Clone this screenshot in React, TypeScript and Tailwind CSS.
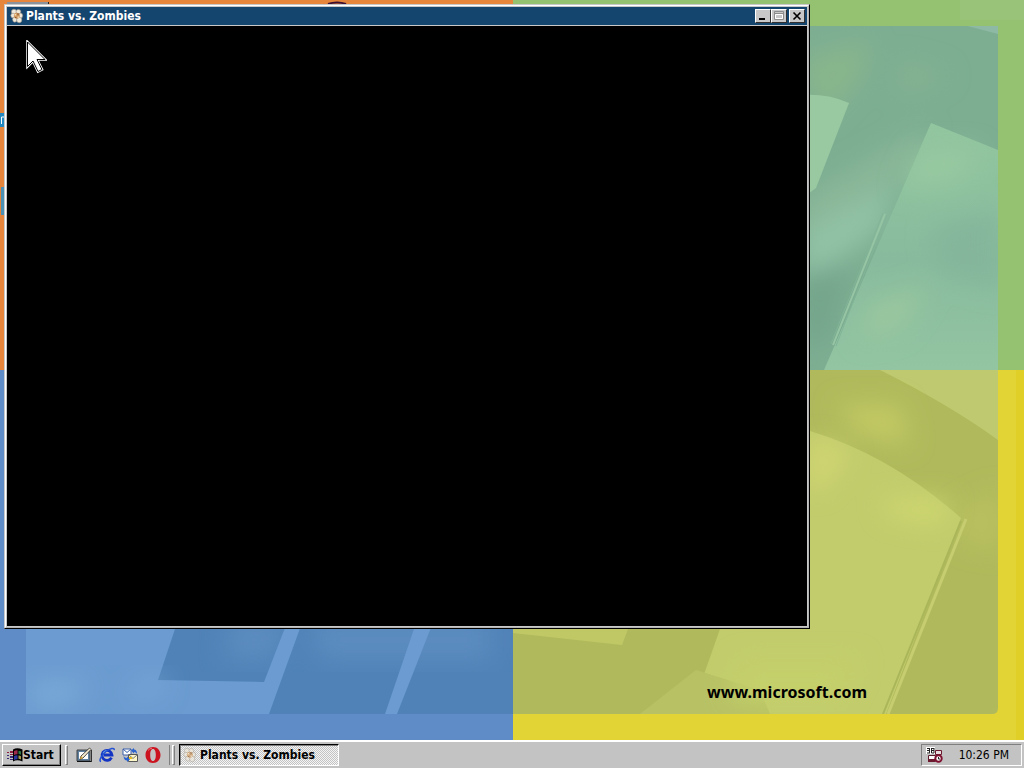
import type { ReactNode } from 'react'
import { clsx } from 'clsx'

function FlowerIcon({ className }: { className?: string }) {
  return (
    <svg viewBox="0 0 16 16" className={clsx('w-4 h-4 shrink-0', className)} aria-hidden="true">
      <g fill="#efe9dc" stroke="#9a9488" strokeWidth="0.6">
        <ellipse cx="5" cy="3.8" rx="2.6" ry="2.6" />
        <ellipse cx="9.4" cy="3.8" rx="2.4" ry="2.4" />
        <ellipse cx="4" cy="7.6" rx="2.2" ry="2.4" />
        <ellipse cx="11.6" cy="7.6" rx="2" ry="2.6" />
        <ellipse cx="5.8" cy="11.6" rx="2.2" ry="2.6" />
        <ellipse cx="10.2" cy="12" rx="2.6" ry="2.8" />
      </g>
      <circle cx="7.8" cy="7.8" r="3" fill="#cf9860" />
      <path d="M5.6 6h1.6v1.6H5.6zM8.6 8.6h1.6v1.2H8.6z" fill="#f7dfb8" />
      <path d="M8.4 5.2h1.2v2H8.4zM6 9h1.4v1H6z" fill="#8d5a2c" />
    </svg>
  )
}

function WindowsIcon() {
  return (
    <svg viewBox="0 0 16 14" className="w-4 h-3.5 shrink-0" aria-hidden="true">
      <path d="M6 1.500q4-2.500 9.500 0v12q-5.500-2.500-9.500 0z" fill="#000" />
      <path d="M7 3q1.500-1 3.500-.8v4Q8.500 6 7 7z" fill="#a02a4c" />
      <path d="M11.500 2.800Q13 2.700 14 3.400v3.400q-1-.700-2.500-.8z" fill="#2c7a48" />
      <path d="M7 8q1.500-1 3.500-.8v4Q8.500 11 7 12z" fill="#2b35a0" />
      <path d="M11.500 7.600Q13 7.500 14 8.200v3.400q-1-.700-2.500-.8z" fill="#a8984c" />
      <path d="M3 3h3v2H3zM0 4h2v1H0zM3 6h3v1H3z" fill="#8e2140" />
      <path d="M3 8h3v2H3zM0 7h2v1H0zM0 10h2v1H0zM3 11h3v1H3z" fill="#3b2978" />
    </svg>
  )
}

function ShowDesktopIcon() {
  return (
    <svg viewBox="0 0 16 16" className="w-4 h-4" aria-hidden="true">
      <path d="M1 3h13v11H1z" fill="#5d7fa0" stroke="#444" />
      <path d="M3 5h9v7H3z" fill="#fff" />
      <path d="M1 14.500h15" stroke="#111" />
      <path d="M15.500 3v12" stroke="#333" />
      <path d="M4 12.500 5 9l8.500-8L15 2.500 7 11z" fill="#f3ead0" stroke="#222" strokeWidth="0.8" />
      <path d="m5 9 2 2-3 1.500z" fill="#d9a83c" />
    </svg>
  )
}

function ExplorerIcon() {
  return (
    <svg viewBox="0 0 16 16" className="w-4 h-4" aria-hidden="true">
      <path
        d="M12.500 10.600A5 5 0 1 1 13 8H5"
        fill="none"
        stroke="#1434c4"
        strokeWidth="2.800"
      />
      <path d="M4 6.500A4.500 4.500 0 0 1 8 3.600" fill="none" stroke="#5f9be8" strokeWidth="1.200" />
      <path
        d="M2 14.500C-.5 14 2 9 6.500 5S15.800.2 15.200 3.200"
        fill="none"
        stroke="#2452d2"
        strokeWidth="1.500"
      />
    </svg>
  )
}

function OutlookIcon() {
  return (
    <svg viewBox="0 0 16 16" className="w-4 h-4" aria-hidden="true">
      <path d="M1 2h8v6H1z" fill="#fff" stroke="#3a5fa8" />
      <path d="m1 2 4 3.500L9 2" fill="none" stroke="#3a5fa8" />
      <path d="M6.500 7.500h9v7h-9z" fill="#fdf6c8" stroke="#555" />
      <path d="m6.500 7.500 4.500 4 4.500-4" fill="none" stroke="#777" />
      <path d="M9 3.500 12 1v1.500q3 0 3 4.500-1-2-3-2V6.500z" fill="#2a62d0" />
      <path d="M8 12.500 5 15v-1.500q-3 0-3.500-4.500 1 2 3.500 2V9.500z" fill="#2a62d0" />
      <path d="M7 10h3v2H7z" fill="#e5bd22" />
    </svg>
  )
}

function OperaIcon() {
  return (
    <svg viewBox="0 0 16 16" className="w-4 h-4" aria-hidden="true">
      <path
        fillRule="evenodd"
        d="M8 0c4.400 0 7.500 3.400 7.500 8s-3.100 8-7.500 8S.5 12.600.5 8 3.600 0 8 0zm0 2C6.100 2 5.200 4.500 5.200 8S6.100 14 8 14s2.800-2.500 2.800-6S9.900 2 8 2z"
        fill="#cc1420"
      />
      <path d="M3 3.500Q4.500 1.500 7 1.200" fill="none" stroke="#f0727a" />
    </svg>
  )
}

function SchedulerIcon() {
  return (
    <svg viewBox="0 0 17 16" className="w-[17px] h-4 shrink-0" aria-hidden="true">
      <path d="M0 0h9v7H0z" fill="#fff" />
      <path d="M1 1.500h3M1 3.500h3M1 6h3M3.500 1v5M5.500 1v5M8 1v5M5.500 1.500H8M5.500 3.500H8M5.500 6H8" stroke="#222" />
      <path d="M2.500 8.500h7v6h-7z" fill="#fff" stroke="#5b1a2c" />
      <path d="M2 12h7v3H2z" fill="#6b1a30" />
      <path d="M9.500 3.500h6v4h-6z" fill="#e8e0e0" stroke="#6b1a30" />
      <circle cx="12.500" cy="11.500" r="3.200" fill="#fff" stroke="#7d1230" strokeWidth="2" />
      <path d="M12.500 10v2h1.500" fill="none" stroke="#222" />
    </svg>
  )
}

function Wallpaper() {
  return (
    <svg
      viewBox="0 0 1024 740"
      preserveAspectRatio="none"
      className="absolute inset-0 w-full h-full"
      aria-hidden="true"
    >
      <defs>
        <filter id="soft" x="-30%" y="-30%" width="160%" height="160%">
          <feGaussianBlur stdDeviation="12" />
        </filter>
        <linearGradient id="pane" x1="0" y1="0" x2="0" y2="1">
          <stop offset="0" stopColor="#92c69f" />
          <stop offset="0.550" stopColor="#88bb9d" />
          <stop offset="1" stopColor="#93c5a2" />
        </linearGradient>
        <clipPath id="green">
          <path d="M513 26h485v344H513z" />
        </clipPath>
        <clipPath id="yellow">
          <path d="M513 370h485v338q0 6-6 6H513z" />
        </clipPath>
        <clipPath id="blue">
          <path d="M26 370h487v344H26z" />
        </clipPath>
      </defs>

      <path d="M0 0h513v370H0z" fill="#e6863c" />
      <path d="M513 0h511v370H513z" fill="#94c270" />
      <path d="M960 0h64v20h-64z" fill="#9ac37a" />
      <path d="M0 370h513v370H0z" fill="#5f8cc6" />
      <path d="M513 370h511v370H513z" fill="#e2d434" />
      <path d="M1016 370h8v370h-8z" fill="#e0cf27" />

      <g clipPath="url(#green)">
        <path d="M513 26h485v344H513z" fill="#7dae92" />
        <g filter="url(#soft)">
          <path d="M800 60 870 40 860 80 820 120z" fill="#88b68b" />
          <path d="M900 60 950 75 900 95z" fill="#84b38f" />
          <path d="M800 200 930 125 905 170 800 240z" fill="#8ab798" />
          <path d="M800 235 900 180 880 230 800 290z" fill="#92c2a6" />
          <path d="M800 275 850 260 830 340 800 350z" fill="#74a68c" />
        </g>
        <path d="M960 24 998 34V24z" fill="#8eb9a4" />
        <path d="M800 95Q828 93 849 103L816 188 800 200z" fill="#99c9a0" />
        <path d="M931 123 998 150V370H824z" fill="url(#pane)" />
        <g filter="url(#soft)">
          <path d="M920 150 980 150 960 180 900 190z" fill="#98c9a0" />
          <path d="M870 305 930 285 900 330 860 340z" fill="#9ac79e" />
          <path d="M930 230 998 210V290L940 270z" fill="#84b69b" />
        </g>
        <path d="M883 213 831 344M887 215 836 346" stroke="#82b498" fill="none" />
        <path d="M885 214 833 345" stroke="#96c5a4" strokeWidth="2" fill="none" />
      </g>

      <g clipPath="url(#yellow)">
        <path d="M513 370h485v344H513z" fill="#b0ba5c" />
        <path d="M880 370H998V440Q950 405 880 370z" fill="#bfc96f" />
        <g filter="url(#soft)">
          <path d="M835 405 900 405 910 445 860 435z" fill="#c2c964" />
          <path d="M960 510 1000 490V550L960 540z" fill="#b9c05e" />
        </g>
        <path d="M513 629 628 629 622 645 513 633z" fill="#c0c866" />
        <path d="M810 431Q890 455 961 518L886 714H690L720 629 810 500z" fill="#c2cc6c" />
        <path d="M696 670 760 690 770 714H640z" fill="#b8c265" />
        <g filter="url(#soft)">
          <path d="M810 440 850 450 820 490 810 490z" fill="#d2d672" />
          <path d="M880 500 950 500 940 525 890 515z" fill="#cfd86f" />
          <path d="M740 660 860 660 840 700 730 700z" fill="#c4d06b" />
        </g>
        <path d="M961 521 883 714" stroke="#aab65a" strokeWidth="2" fill="none" />
        <path d="M966 519 888 714" stroke="#c5cd70" strokeWidth="3" fill="none" />
      </g>

      <g clipPath="url(#blue)">
        <path d="M26 370h487v344H26z" fill="#5082b7" />
        <g filter="url(#soft)">
          <path d="M230 620h60l-15 40h-50zM310 620h180v40H320z" fill="#5b8cc0" />
        </g>
        <path d="M26 620H178L158 680 264 682 288 620H303L269 714H26z" fill="#6b9bd0" />
        <g filter="url(#soft)">
          <path d="M30 680 90 680 70 708 30 708z" fill="#78a8d7" />
          <path d="M130 690 160 675 165 690 130 700z" fill="#7aa8da" />
        </g>
        <path d="M417 620H434L397 714H385z" fill="#6b9bd0" />
      </g>

      {/* Desktop icons showing from behind the open window */}
      <path d="M7 2h41v2H7z" fill="#8b929b" />
      <path d="M48 2h1v2h-1z" fill="#222" />
      <path d="M328 4q9-3 18 0" fill="none" stroke="#3b1034" strokeWidth="2" />
      <path d="M0 113h4v14H0z" fill="#2389c2" />
      <path d="M1.500 124v-7h3" fill="none" stroke="#fff" />
      <path d="M1 187h4v28H1z" fill="#4a91b5" />
    </svg>
  )
}

function Cursor() {
  const outline = 'M1.500 2v24.500l5.500-5.500 5 10.500 4-2-5-10h8z'
  return (
    <svg viewBox="0 0 21 34" className="absolute left-[19px] top-3.5 w-[21px] h-[34px]" aria-hidden="true">
      <path d={outline} fill="#fff" stroke="#fff" strokeWidth="2.500" />
      <path d={outline} fill="#fff" stroke="#000" strokeWidth="1" />
    </svg>
  )
}

function CaptionButton({ label, className, children }: { label: string; className?: string; children: ReactNode }) {
  return (
    <button
      aria-label={label}
      className={clsx(
        'w-4 h-3.5 flex items-center justify-center bg-[#c8c8c8] border border-t-white border-l-white border-r-[#303030] border-b-[#303030]',
        className
      )}
    >
      <svg viewBox="0 0 12 10" className="w-3 h-2.5" fill="none" aria-hidden="true">
        {children}
      </svg>
    </button>
  )
}

function GameWindow() {
  return (
    <section
      aria-label="Plants vs. Zombies"
      className="absolute left-1 top-1 border border-t-[#c8c8c8] border-l-[#c8c8c8] border-r-black border-b-black"
    >
      <div className="border border-t-white border-l-white border-r-[#b4b4b4] border-b-[#b4b4b4] bg-[#c8c8c8] p-px">
        <header className="h-[18px] flex items-center bg-[#14456f] pl-0.5 pr-0.5">
          <FlowerIcon />
          <h1 className="flex-1 pl-px font-['DejaVu_Sans_Condensed','DejaVu_Sans',sans-serif] font-bold text-xs text-white">
            Plants vs. Zombies
          </h1>
          <div className="flex">
            <CaptionButton label="Minimize">
              <path d="M2 8h6" stroke="#000" strokeWidth="2" />
            </CaptionButton>
            <CaptionButton label="Maximize">
              <path d="M1.500 0.500h9v8h-9zM2 2.500h8" stroke="#8c8c8c" />
              <path d="M2.500 3.500h7v4h-7z" stroke="#fff" />
            </CaptionButton>
            <CaptionButton label="Close" className="ml-0.5">
              <path d="m2.500 1.500 7 7m0-7-7 7" stroke="#000" strokeWidth="1.600" />
            </CaptionButton>
          </div>
        </header>
        <div className="relative mt-px w-[800px] h-[600px] bg-black">
          <Cursor />
        </div>
      </div>
    </section>
  )
}

function Grip() {
  return <span className="w-[3px] h-5 border border-t-white border-l-white border-r-[#808080] border-b-[#808080]" />
}

const quickLaunch = [
  { label: 'Show Desktop', icon: <ShowDesktopIcon /> },
  { label: 'Internet Explorer', icon: <ExplorerIcon /> },
  { label: 'Outlook Express', icon: <OutlookIcon /> },
  { label: 'Opera', icon: <OperaIcon /> },
]

function Taskbar() {
  return (
    <footer className="h-7 shrink-0 flex items-center bg-[#c3c3c3] border-t-2 border-white px-0.5 font-['DejaVu_Sans_Condensed','DejaVu_Sans',sans-serif] text-xs">
      <button className="h-[22px] w-[59px] flex items-center pl-1 border border-t-white border-l-white border-r-black border-b-black shadow-[inset_-1px_-1px_0_#808080]">
        <WindowsIcon />
        <span className="font-bold">Start</span>
      </button>
      <div className="flex items-center pl-1 pr-1.5">
        <Grip />
      </div>
      <nav aria-label="Quick Launch" className="flex items-center gap-[7px] pl-0.5 pr-2">
        {quickLaunch.map((item) => (
          <button key={item.label} aria-label={item.label}>
            {item.icon}
          </button>
        ))}
      </nav>
      <div className="flex items-center gap-0.5 pr-1">
        <span className="w-px h-5 bg-[#808080]" />
        <Grip />
      </div>
      <button className="h-[22px] w-40 flex items-center pl-0.5 border border-t-black border-l-black border-r-white border-b-white shadow-[inset_1px_1px_0_#808080] bg-[#c8c8c8] bg-[repeating-conic-gradient(#c3c3c3_0_25%,#f4f4f4_0_50%)] bg-size-[2px_2px]">
        <FlowerIcon className="opacity-70" />
        <span className="pl-0.5 font-bold">Plants vs. Zombies</span>
      </button>
      <div className="ml-auto h-[22px] w-[101px] flex items-center justify-between pl-1 pr-3 border border-t-[#808080] border-l-[#808080] border-r-white border-b-white">
        <SchedulerIcon />
        <time>10:26 PM</time>
      </div>
    </footer>
  )
}

export default function App() {
  return (
    <div className="h-screen flex flex-col overflow-hidden text-black">
      <main className="relative flex-1 overflow-hidden">
        <Wallpaper />
        <p className="absolute right-[157px] bottom-9 font-['Noto_Sans',sans-serif] font-bold text-base">
          www.microsoft.com
        </p>
        <GameWindow />
      </main>
      <Taskbar />
    </div>
  )
}
